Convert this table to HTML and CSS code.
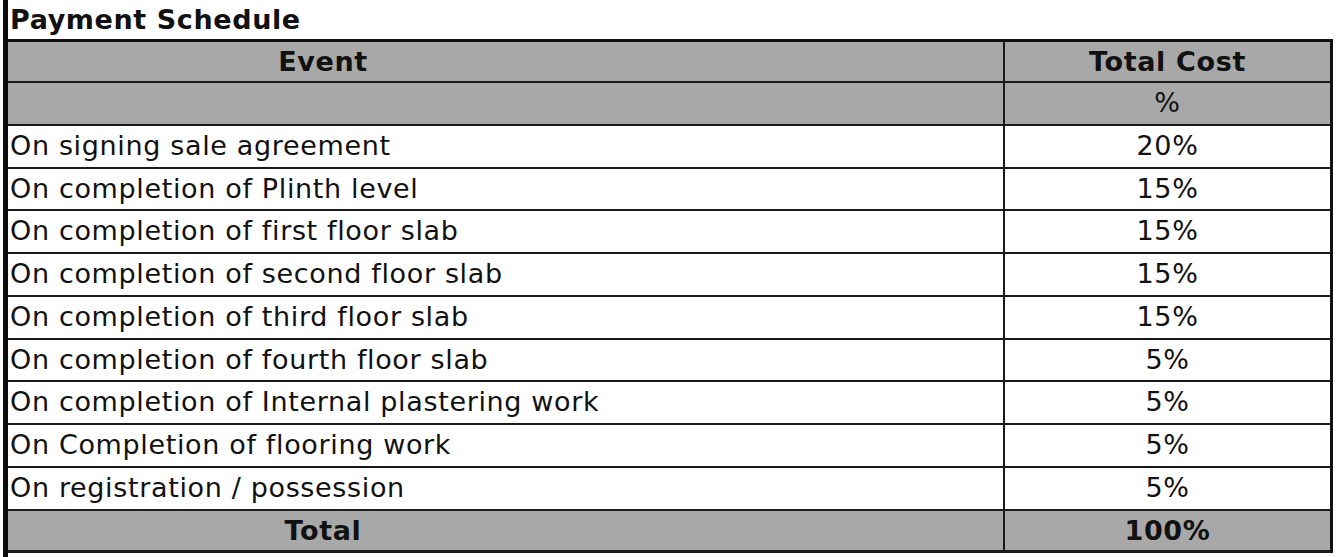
FILE: index.html
```html
<!DOCTYPE html>
<html>
<head>
<meta charset="utf-8">
<link rel="stylesheet" href="styles.css">
</head>
<body>
<div class="sheet">
  <div class="title">Payment Schedule</div>
  <table class="schedule">
    <colgroup>
      <col class="col-event">
      <col class="col-cost">
    </colgroup>
    <tr class="head">
      <th class="event-h">Event</th>
      <th class="cost">Total Cost</th>
    </tr>
    <tr class="sub">
      <td></td>
      <td class="cost">%</td>
    </tr>
    <tr><td>On signing sale agreement</td><td class="cost">20%</td></tr>
    <tr><td>On completion of Plinth level</td><td class="cost">15%</td></tr>
    <tr><td>On completion of first floor slab</td><td class="cost">15%</td></tr>
    <tr><td>On completion of second floor slab</td><td class="cost">15%</td></tr>
    <tr><td>On completion of third floor slab</td><td class="cost">15%</td></tr>
    <tr><td>On completion of fourth floor slab</td><td class="cost">5%</td></tr>
    <tr><td>On completion of Internal plastering work</td><td class="cost">5%</td></tr>
    <tr><td>On Completion of flooring work</td><td class="cost">5%</td></tr>
    <tr><td>On registration / possession</td><td class="cost">5%</td></tr>
    <tr class="total">
      <th class="event-h">Total</th>
      <th class="cost">100%</th>
    </tr>
  </table>
</div>
</body>
</html>
```

FILE: styles.css
```css
html, body {
  margin: 0;
  padding: 0;
  background: #ffffff;
}

body {
  font-family: "DejaVu Sans", "Liberation Sans", sans-serif;
  color: #111111;
}

.sheet {
  margin-left: 3px;
  width: 1330px;
  height: 557px;
  border-left: 5px solid #0d0d0d;
  box-sizing: border-box;
}

.title {
  font-weight: bold;
  font-size: 27px;
  letter-spacing: 0.6px;
  line-height: 39px;
  height: 39px;
  padding-left: 2px;
}

.schedule {
  width: 1325px;
  table-layout: fixed;
  border-collapse: separate;
  border-spacing: 0;
  border-top: 3px solid #111111;
  border-right: 3px solid #111111;
  font-size: 27px;
  letter-spacing: 0.65px;
}

.col-event {
  width: 997px;
}

.schedule td,
.schedule th {
  padding: 0 0 0 2px;
  line-height: 40.75px;
  border-bottom: 2px solid #1a1a1a;
  text-align: left;
  white-space: nowrap;
  overflow: hidden;
}

.schedule td:first-child,
.schedule th:first-child {
  border-right: 2px solid #1a1a1a;
}

.schedule .cost {
  text-align: center;
  padding: 0;
}

.schedule th {
  font-weight: bold;
}

.head th,
.sub td,
.total th {
  background: #a8a8a8;
}

.head th {
  line-height: 39px;
}

.event-h.event-h {
  text-align: center;
  padding-right: 367px;
}

.total th {
  line-height: 39px;
  border-bottom-width: 3px;
}
```
